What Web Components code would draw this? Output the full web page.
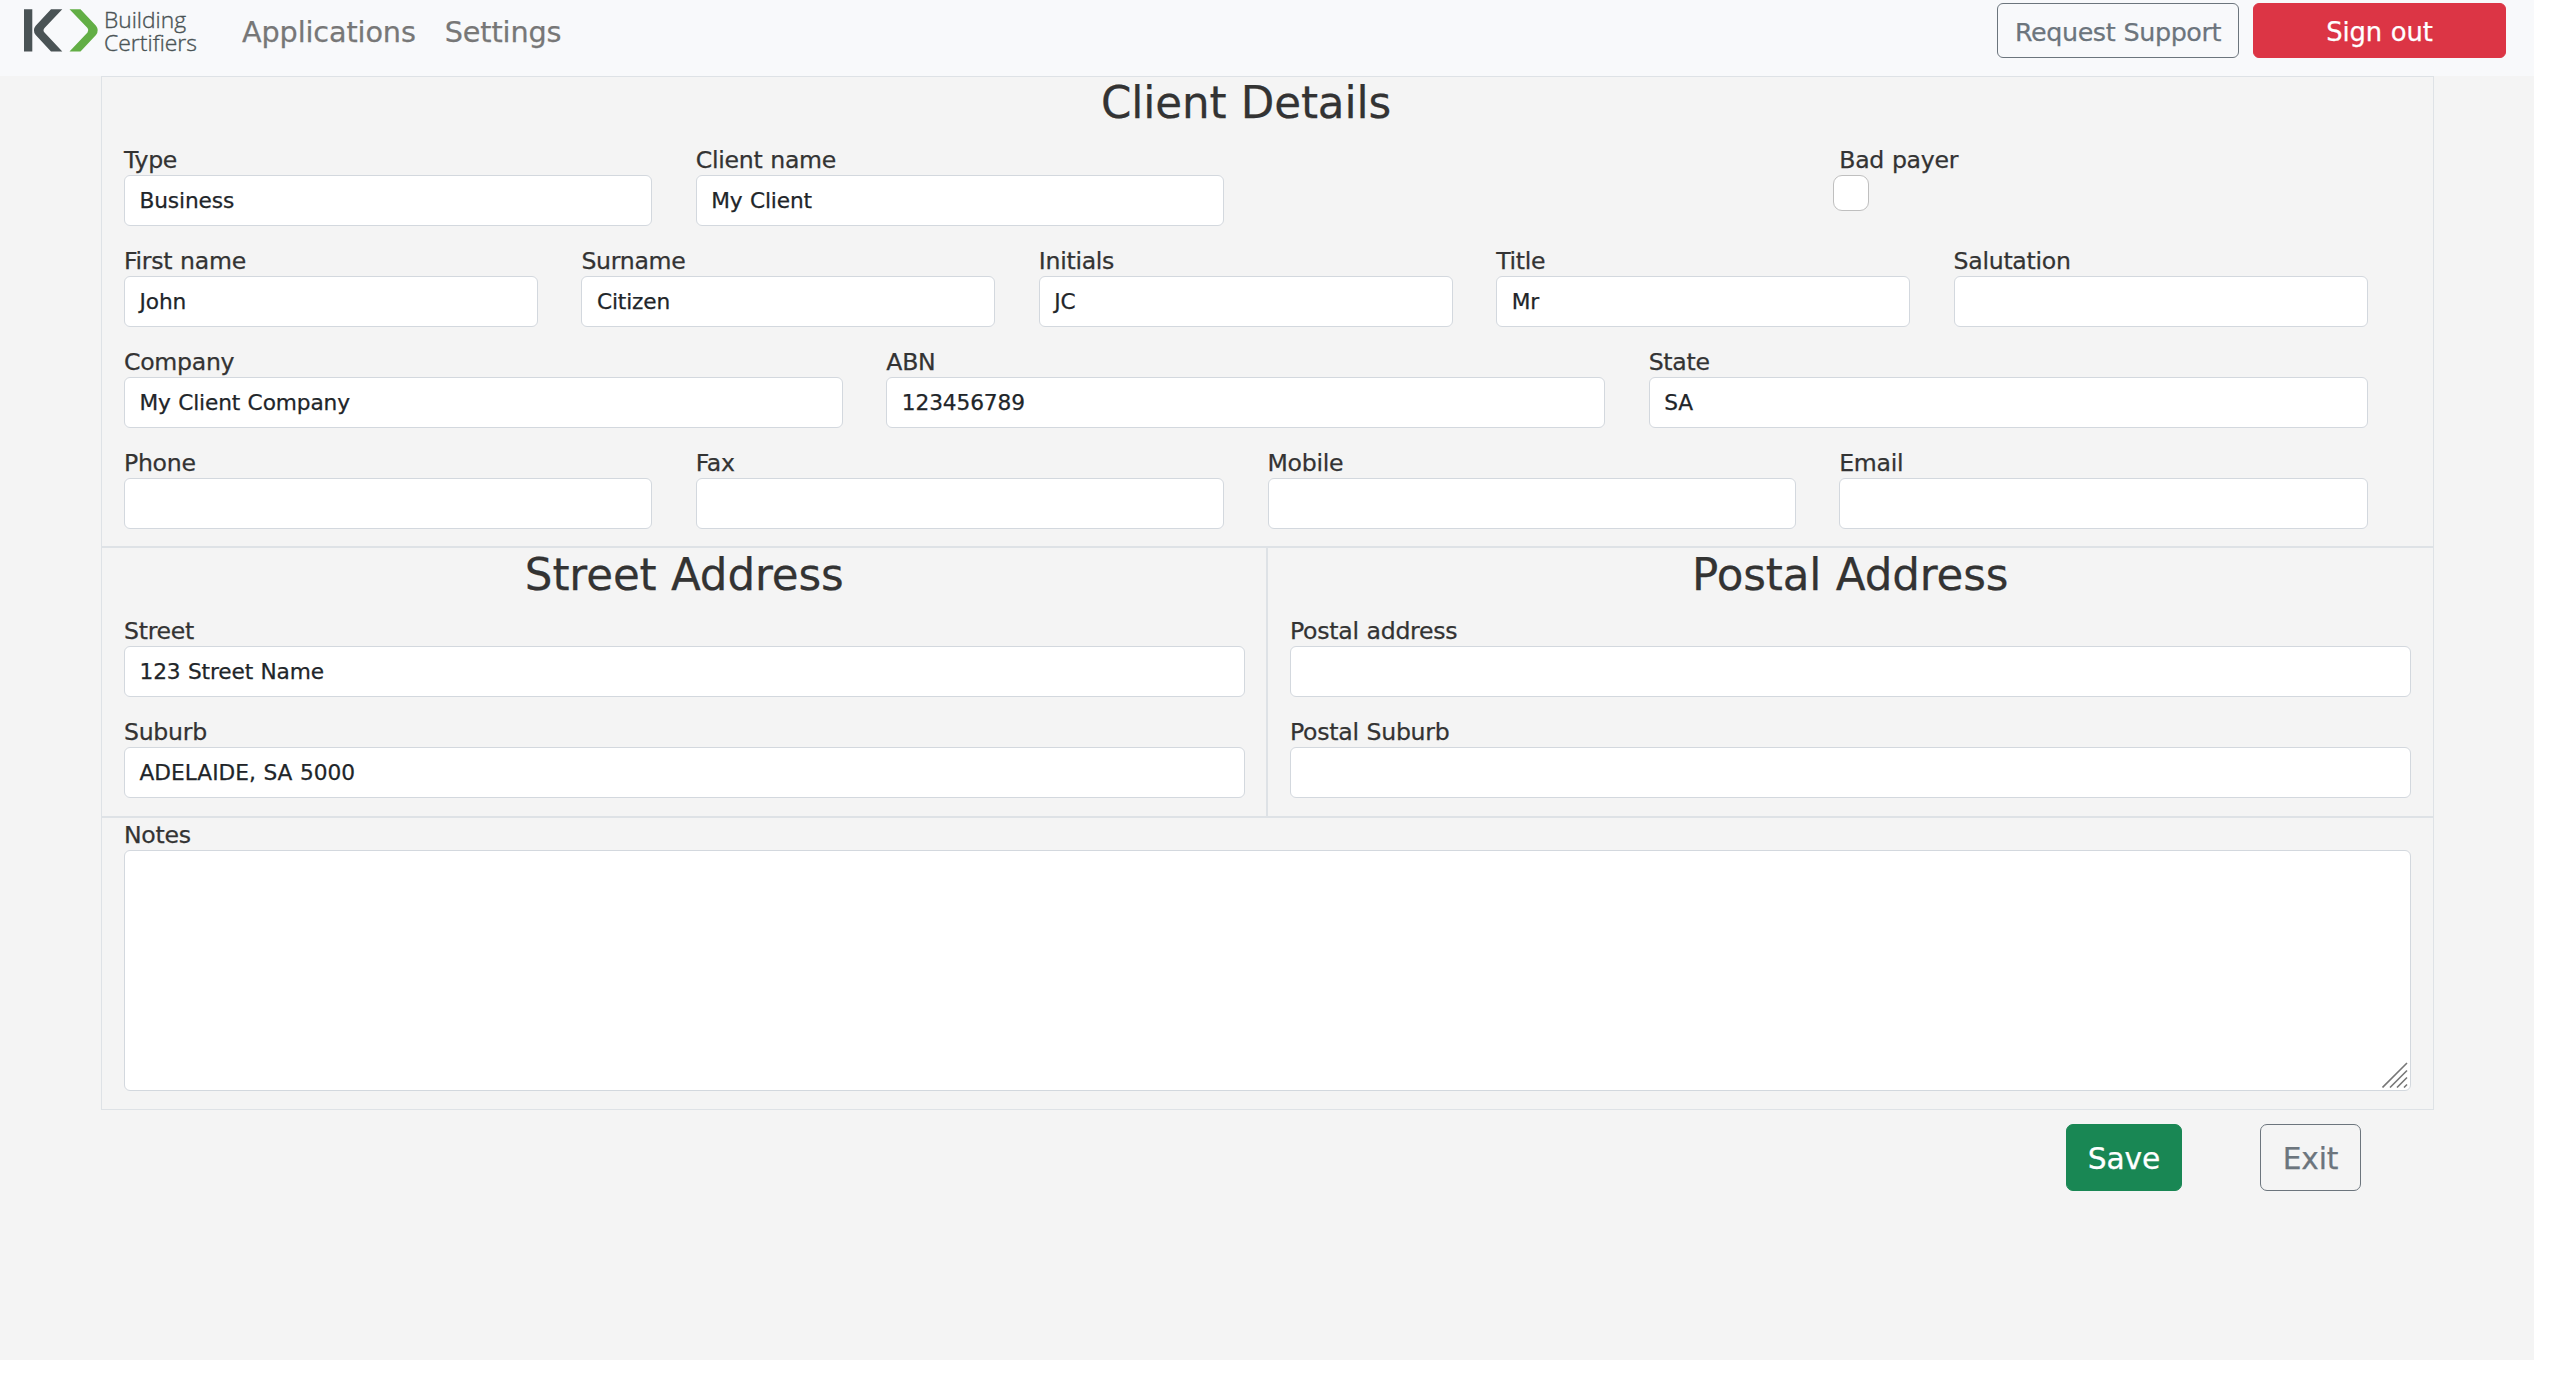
<!DOCTYPE html>
<html lang="en">
<head>
<meta charset="utf-8">
<title>Client Details</title>
<style>
body{margin:0;background:#fff;font-family:"DejaVu Sans",Verdana,sans-serif;color:#333;letter-spacing:-.008em;word-spacing:.04em;-webkit-text-stroke:.25px currentColor}
</style>
</head>
<body>
<client-page></client-page>
<script>
const define=(name,html,init)=>customElements.define(name,class extends HTMLElement{
  constructor(){super();this.attachShadow({mode:'open'}).innerHTML=html;}
  connectedCallback(){if(init)init(this,this.shadowRoot);}
});

define('brand-logo',`<style>:host{display:block;width:180px;height:60px}svg{display:block}</style>
<svg width="180" height="60" viewBox="0 0 180 60">
<path fill="#4a5355" d="M0 9.2H8.3V51.6H0ZM27 9.2H38.3L20.5 28Q18.5 30.3 20.5 32.6L38.3 51.6H27L11.7 35Q8 30.4 11.7 25.8Z"/>
<path fill="#62ae45" d="M45.5 9.2H56.5L72 25.8Q75.5 30.4 72 35L56.5 51.6H45.5L63.5 32.6Q65.3 30.3 63.5 28Z"/>
<g fill="#4a5355" font-family="Open Sans,Noto Sans,sans-serif" font-size="22" font-weight="300" letter-spacing="0" word-spacing="0" stroke="#4a5355" stroke-width=".35">
<text x="80" y="27.6" textLength="82" lengthAdjust="spacingAndGlyphs">Building</text>
<text x="80" y="50.9" textLength="93" lengthAdjust="spacingAndGlyphs">Certifiers</text></g></svg>`);

define('nav-link',`<style>:host{display:block;font-size:28.7px;line-height:40px;color:#777;white-space:nowrap}</style><slot></slot>`);

define('ui-button',`<style>
:host{display:flex;box-sizing:border-box;align-items:center;justify-content:center;border:1.5px solid #6c757d;border-radius:6px;color:#6c757d;font-size:25.8px;padding-top:2px;white-space:nowrap}
:host([kind=danger]){background:#dc3545;border-color:#dc3545;color:#fff}
:host([kind=success]){background:#198754;border-color:#198754;color:#fff}
</style><slot></slot>`);

define('nav-bar',`<style>
:host{display:flex;box-sizing:border-box;height:76px;background:#f8f9fb;padding:0 28px 0 24px;align-items:flex-start}
.links{display:flex;gap:29px;margin:12px 0 0 38px}
.actions{display:flex;gap:14px;margin:3px 0 0 auto}
.support{width:242px;height:55px;font-size:25.4px;letter-spacing:-.016em}.out{width:253px;height:55px}
</style><brand-logo></brand-logo>
<div class="links"><nav-link>Applications</nav-link><nav-link>Settings</nav-link></div>
<div class="actions"><ui-button class="support">Request Support</ui-button><ui-button class="out" kind="danger">Sign out</ui-button></div>`);

define('section-title',`<style>:host{display:block;text-align:center;font-size:43.6px;line-height:53px;height:68px}</style><slot></slot>`);

define('form-field',`<style>
:host{display:block;box-sizing:border-box;min-width:0;height:101px;padding-right:var(--gutter,43.4px)}
.label{height:30px;line-height:30px;font-size:23.6px;letter-spacing:-.012em;white-space:nowrap}
.box{box-sizing:border-box;height:51px;border:1px solid #d3d8de;border-radius:6px;background:#fff;color:#212529;font-size:21.7px;line-height:50px;padding-left:14.5px;white-space:nowrap}
:host([check]) .box{width:36px;height:36px;border:1.5px solid #bfbfbf;border-radius:9px;padding:0;margin:0 0 0 -6px}
:host([area]){height:auto}
:host([area]) .box{height:241px;display:flex;align-items:flex-end;justify-content:flex-end;padding:0 2px 2px}
svg{display:none}:host([area]) svg{display:block}
</style><div class="label"></div><div class="box"><span></span><svg width="26" height="26" viewBox="0 0 26 26"><path d="M.5 25.5L25 1M8 25.5L25 8.5M15 25.5L25 15.5M22 25.5L25 22.5" stroke="#777" stroke-width="1.6" fill="none"/></svg></div>`,
(el,r)=>{r.querySelector('.label').textContent=el.getAttribute('label');r.querySelector('span').textContent=el.getAttribute('value')||'';});

define('field-row',`<style>:host{display:grid;grid-template-columns:repeat(var(--cols,1),minmax(0,1fr))}</style><slot></slot>`,
el=>el.style.setProperty('--cols',el.getAttribute('cols')));

define('client-form',`<style>
:host{display:block;box-sizing:border-box;width:2333px;height:1034px;border:1px solid #dee2e6}
.top{padding:0 22px;height:469px;border-bottom:2px solid #dee2e6;box-sizing:content-box}
.top section-title{padding-right:43px;line-height:52px}
.pair{display:grid;grid-template-columns:1164px 1fr;height:268px;border-bottom:2px solid #dee2e6}
.pair>div{padding:1px 21.5px 0 22px;--gutter:0px}
.pair section-title{height:67px}
.pair>div+div{border-left:2px solid #dee2e6;padding:1px 22.5px 0 22px}
.notes{padding:2px 22.5px 0 22px;--gutter:0px}
.caps{letter-spacing:0}
</style>
<div class="top"><section-title>Client Details</section-title>
<field-row cols="4"><form-field label="Type" value="Business"></form-field><form-field label="Client name" value="My Client"></form-field><span></span><form-field check label="Bad payer"></form-field></field-row>
<field-row cols="5"><form-field label="First name" value="John"></form-field><form-field label="Surname" value="Citizen"></form-field><form-field label="Initials" value="JC"></form-field><form-field label="Title" value="Mr"></form-field><form-field label="Salutation"></form-field></field-row>
<field-row cols="3"><form-field label="Company" value="My Client Company"></form-field><form-field label="ABN" value="123456789"></form-field><form-field label="State" value="SA"></form-field></field-row>
<field-row cols="4"><form-field label="Phone"></form-field><form-field label="Fax"></form-field><form-field label="Mobile"></form-field><form-field label="Email"></form-field></field-row></div>
<div class="pair"><div><section-title>Street Address</section-title><form-field label="Street" value="123 Street Name"></form-field><form-field class="caps" label="Suburb" value="ADELAIDE, SA 5000"></form-field></div>
<div><section-title>Postal Address</section-title><form-field label="Postal address"></form-field><form-field label="Postal Suburb"></form-field></div></div>
<div class="notes"><form-field area label="Notes"></form-field></div>`);

define('client-page',`<style>
:host{display:flex;flex-direction:column;width:2534px;height:1360px;background:#f4f4f4}
nav-bar{flex:none}client-form{margin-left:101px;flex:none}
.actions{display:flex;gap:78px;justify-content:flex-end;margin:14px 173px 0 0}
ui-button{height:67px;font-size:29.7px;border-radius:7px}
.save{width:116px}.exit{width:101px}
</style><nav-bar></nav-bar><client-form></client-form>
<div class="actions"><ui-button class="save" kind="success">Save</ui-button><ui-button class="exit">Exit</ui-button></div>`);
</script>
</body>
</html>
